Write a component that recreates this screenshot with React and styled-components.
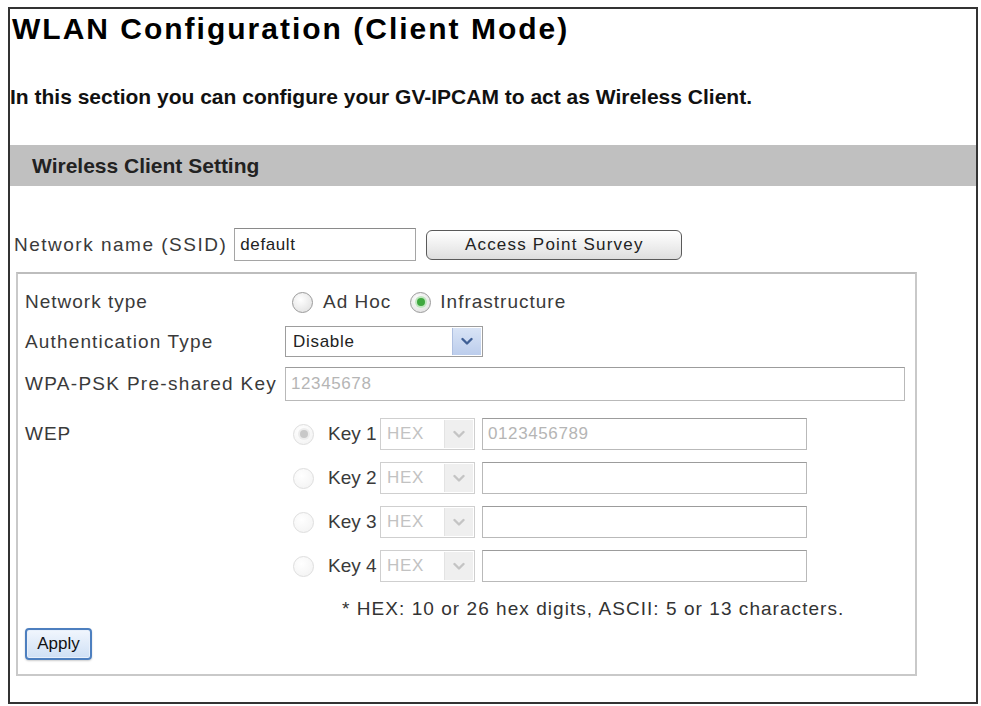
import React from "react";
import styled, { createGlobalStyle } from "styled-components";

const GlobalStyle = createGlobalStyle`
  body {
    margin: 0;
    background: #fff;
    font-family: "Liberation Sans", Arial, sans-serif;
    color: #333;
  }
`;

const Frame = styled("div")`
  box-sizing: border-box;
  width: 970px;
  height: 697px;
  margin: 7px 0 0 8px;
  border: 2px solid #333;
`;

const Title = styled("h1")`
  margin: 0;
  padding: 2px 0 0 2px;
  font-size: 30px;
  line-height: 36px;
  letter-spacing: 2px;
  font-weight: bold;
  color: #000;
`;

const Intro = styled("p")`
  margin: 37px 0 0 0;
  font-size: 21px;
  line-height: 26px;
  font-weight: bold;
  color: #111;
`;

const Band = styled("div")`
  display: flex;
  align-items: center;
  margin-top: 35px;
  height: 41px;
  padding-left: 22px;
  background: #c0c0c0;
  font-size: 21px;
  font-weight: bold;
  color: #222;
`;

const SsidRow = styled("div")`
  display: flex;
  align-items: center;
  margin-top: 42px;
  padding-left: 4px;
  height: 33px;
`;

const Label = styled("span")`
  font-size: 19px;
  letter-spacing: ${(props) => props.spacing || "1px"};
  color: #3a3a3a;
  white-space: nowrap;
`;

const TextInput = styled("input")`
  box-sizing: border-box;
  width: ${(props) => props.w}px;
  height: ${(props) => props.h || 32}px;
  margin: 0 0 0 ${(props) => props.ml || 0}px;
  padding: 0 5px;
  border: 1px solid ${(props) => (props.disabled ? "#b9b9b9" : "#a5a5a5")};
  border-top-color: ${(props) => (props.disabled ? "#9c9c9c" : "#8a8a8a")};
  background: #fff;
  font-family: "Liberation Sans", Arial, sans-serif;
  font-size: 17px;
  letter-spacing: 0.6px;
  color: ${(props) => (props.disabled ? "#b5b5b5" : "#222")};
  outline: none;
`;

const SurveyButton = styled("button")`
  box-sizing: border-box;
  width: 256px;
  height: 30px;
  margin-left: 10px;
  border: 1.5px solid #5a5a5a;
  border-radius: 6px;
  background: linear-gradient(#ffffff, #ececec 60%, #dedede);
  font-family: "Liberation Sans", Arial, sans-serif;
  font-size: 17px;
  letter-spacing: 1.2px;
  color: #222;
`;

const FieldBox = styled("div")`
  box-sizing: border-box;
  width: 901px;
  height: 404px;
  margin: 11px 0 0 6px;
  padding: 13px 0 0 7px;
  border: 2px solid #c9c9c9;
  border-top-color: #bdbdbd;
`;

const Row = styled("div")`
  display: grid;
  grid-template-columns: 260px auto;
  align-items: ${(props) => props.align || "center"};
  height: ${(props) => (props.h ? `${props.h}px` : "auto")};
  margin-top: ${(props) => props.mt || 0}px;
`;

const Options = styled("div")`
  display: flex;
  align-items: center;
`;

const Radio = styled("span")`
  box-sizing: border-box;
  display: inline-flex;
  align-items: center;
  justify-content: center;
  width: 21px;
  height: 21px;
  margin-left: ${(props) => props.ml || 0}px;
  border-radius: 50%;
  border: 1.5px solid ${(props) => (props.disabled ? "#dedede" : "#9a9a9a")};
  background: ${(props) =>
    props.disabled
      ? "radial-gradient(circle at 40% 35%, #ffffff, #f1f1f1)"
      : "radial-gradient(circle at 40% 35%, #ffffff, #dcdcdc)"};
  &::after {
    content: "";
    display: ${(props) => (props.checked ? "block" : "none")};
    width: 8px;
    height: 8px;
    border-radius: 50%;
    background: ${(props) => (props.disabled ? "#c8c8c8" : "#3fa83f")};
    box-shadow: 0 0 0 2px
      ${(props) => (props.disabled ? "#ececec" : "#bfe6bf")};
  }
`;

const OptionText = styled("span")`
  margin-left: ${(props) => props.ml || 0}px;
  font-size: 19px;
  letter-spacing: 1px;
  color: #3a3a3a;
`;

const SelectBox = styled("div")`
  box-sizing: border-box;
  display: flex;
  align-items: stretch;
  width: ${(props) => props.w}px;
  height: ${(props) => props.h || 32}px;
  margin-left: ${(props) => props.ml || 0}px;
  border: 1px solid ${(props) => (props.disabled ? "#cfcfcf" : "#9d9d9d")};
  background: #fff;
`;

const SelectValue = styled("span")`
  flex: 1;
  display: flex;
  align-items: center;
  padding-left: ${(props) => (props.disabled ? 6 : 7)}px;
  font-size: 17px;
  letter-spacing: 0.7px;
  color: ${(props) => (props.disabled ? "#c2c2c2" : "#222")};
`;

const ArrowBox = styled("span")`
  display: flex;
  align-items: center;
  justify-content: center;
  width: 28px;
  margin: 1px;
  background: ${(props) =>
    props.disabled ? "#efefef" : "linear-gradient(#d9e4f6, #bccdec)"};
  border-left: 1px solid ${(props) => (props.disabled ? "#e3e3e3" : "#aebfe0")};
`;

const KeyList = styled("div")`
  display: flex;
  flex-direction: column;
  gap: 12px;
`;

const KeyRow = styled("div")`
  display: flex;
  align-items: center;
  height: 32px;
`;

const KeyName = styled("span")`
  width: 48px;
  margin-left: 14px;
  font-size: 19px;
  color: #3a3a3a;
  white-space: nowrap;
`;

const Note = styled("div")`
  margin-top: 15px;
  padding-left: 317px;
  font-size: 19px;
  line-height: 24px;
  letter-spacing: 1.05px;
  color: #333;
`;

const ApplyButton = styled("button")`
  box-sizing: border-box;
  width: 67px;
  height: 32px;
  margin-top: 7px;
  padding: 0;
  border: 2px solid #4d7fbf;
  border-radius: 4px;
  background: linear-gradient(#f1f6fd, #cfe0f5);
  box-shadow: inset 0 0 0 1px #e8f0fb, 0 1px 2px rgba(0, 0, 0, 0.2);
  font-family: "Liberation Sans", Arial, sans-serif;
  font-size: 17px;
  color: #111;
`;

const Chevron = ({ color }) => (
  <svg width="12" height="9" viewBox="0 0 12 9">
    <path
      d="M1.5 2 L6 6.5 L10.5 2"
      fill="none"
      stroke={color}
      strokeWidth="2.4"
      strokeLinecap="round"
      strokeLinejoin="round"
    />
  </svg>
);

const Select = ({ value, w, ml, disabled }) => (
  <SelectBox w={w} ml={ml} h={disabled ? 32 : 31} disabled={disabled}>
    <SelectValue disabled={disabled}>{value}</SelectValue>
    <ArrowBox disabled={disabled}>
      <Chevron color={disabled ? "#c4c4c4" : "#3f5f95"} />
    </ArrowBox>
  </SelectBox>
);

const keys = [
  { name: "Key 1", value: "0123456789", checked: true },
  { name: "Key 2", value: "" },
  { name: "Key 3", value: "" },
  { name: "Key 4", value: "" },
];

const App = () => (
  <>
    <GlobalStyle />
    <Frame>
      <Title>WLAN Configuration (Client Mode)</Title>
      <Intro>
        In this section you can configure your GV-IPCAM to act as Wireless
        Client.
      </Intro>
      <Band>Wireless Client Setting</Band>

      <SsidRow>
        <Label spacing="1.5px">Network name (SSID)</Label>
        <TextInput w={182} h={33} ml={7} defaultValue="default" />
        <SurveyButton>Access Point Survey</SurveyButton>
      </SsidRow>

      <FieldBox>
        <Row h={30}>
          <Label>Network type</Label>
          <Options>
            <Radio ml={7} />
            <OptionText ml={10}>Ad Hoc</OptionText>
            <Radio ml={19} checked />
            <OptionText ml={9}>Infrastructure</OptionText>
          </Options>
        </Row>

        <Row mt={9}>
          <Label spacing="1.15px">Authentication Type</Label>
          <Select value="Disable" w={198} />
        </Row>

        <Row mt={10}>
          <Label spacing="1.3px">WPA-PSK Pre-shared Key</Label>
          <TextInput w={620} h={34} disabled defaultValue="12345678" />
        </Row>

        <Row mt={17} align="start">
          <Label style={{ lineHeight: "32px" }}>WEP</Label>
          <KeyList>
            {keys.map((key) => (
              <KeyRow key={key.name}>
                <Radio ml={8} disabled checked={key.checked} />
                <KeyName>{key.name}</KeyName>
                <Select value="HEX" w={95} ml={4} disabled />
                <TextInput w={325} ml={7} disabled defaultValue={key.value} />
              </KeyRow>
            ))}
          </KeyList>
        </Row>

        <Note>* HEX: 10 or 26 hex digits, ASCII: 5 or 13 characters.</Note>
        <ApplyButton>Apply</ApplyButton>
      </FieldBox>
    </Frame>
  </>
);

export default App;
